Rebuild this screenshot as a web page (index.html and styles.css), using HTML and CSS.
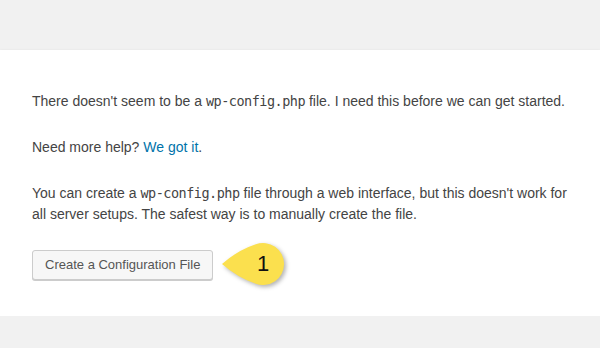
FILE: index.html
```html
<!DOCTYPE html>
<html lang="en">
<head>
  <meta charset="UTF-8" />
  <meta name="viewport" content="width=device-width, initial-scale=1.0"/>
  <title>WordPress &rsaquo; Setup Configuration File</title>
  <link rel="stylesheet" href="styles.css">
</head>
<body>
  <div class="setup">
    <p>There doesn't seem to be a <code>wp-config.php</code> file. I need this before we can get started.</p>
    <p>Need more help? <a href="#">We got it</a>.</p>
    <p>You can create a <code>wp-config.php</code> file through a web interface, but this doesn't work for all server setups. The safest way is to manually create the file.</p>
    <p class="step">
      <a href="#" class="button">Create a Configuration File</a>
      <span class="callout">
        <svg width="76" height="54" viewBox="0 0 76 54">
          <path d="M4 24 Q 20 10 37.8 4.3 A 21 21 0 1 1 37.8 43.7 Q 20 38 4 24 Z" fill="#fbe04e" />
        </svg>
        <span class="callout-num">1</span>
      </span>
    </p>
  </div>
</body>
</html>
```

FILE: styles.css
```css
body {
  margin: 0;
  padding: 50px 0 0;
  background: #f1f1f1;
  font-family: "Liberation Sans", Arial, sans-serif;
  color: #444;
}

.setup {
  background: #fff;
  padding: 16px 28px 16px 32px;
  box-shadow: 0 1px 3px rgba(0,0,0,0.13);
}

.setup p {
  font-size: 14px;
  line-height: 1.5;
  margin: 25px 0 20px;
}

.setup p code {
  font-family: "DejaVu Sans Mono", monospace;
  font-size: 13.5px;
  letter-spacing: -0.5px;
}

.setup a {
  color: #0073aa;
  text-decoration: none;
}

.step {
  position: relative;
}

.setup .button {
  display: inline-block;
  color: #555;
  background: #f7f7f7;
  border: 1px solid #ccc;
  border-radius: 3px;
  box-shadow: 0 1px 0 #ccc;
  line-height: 27px;
  padding: 0 12px 1px;
  font-size: 13px;
  vertical-align: top;
}

.callout {
  position: absolute;
  left: 186px;
  top: -10px;
  width: 76px;
  height: 54px;
}

.callout svg {
  display: block;
  filter: drop-shadow(2px 2px 2px rgba(0,0,0,0.3));
}

.callout-num {
  position: absolute;
  left: 35px;
  top: 11px;
  width: 20px;
  text-align: center;
  font-size: 22px;
  line-height: 26px;
  color: #111;
}
```
